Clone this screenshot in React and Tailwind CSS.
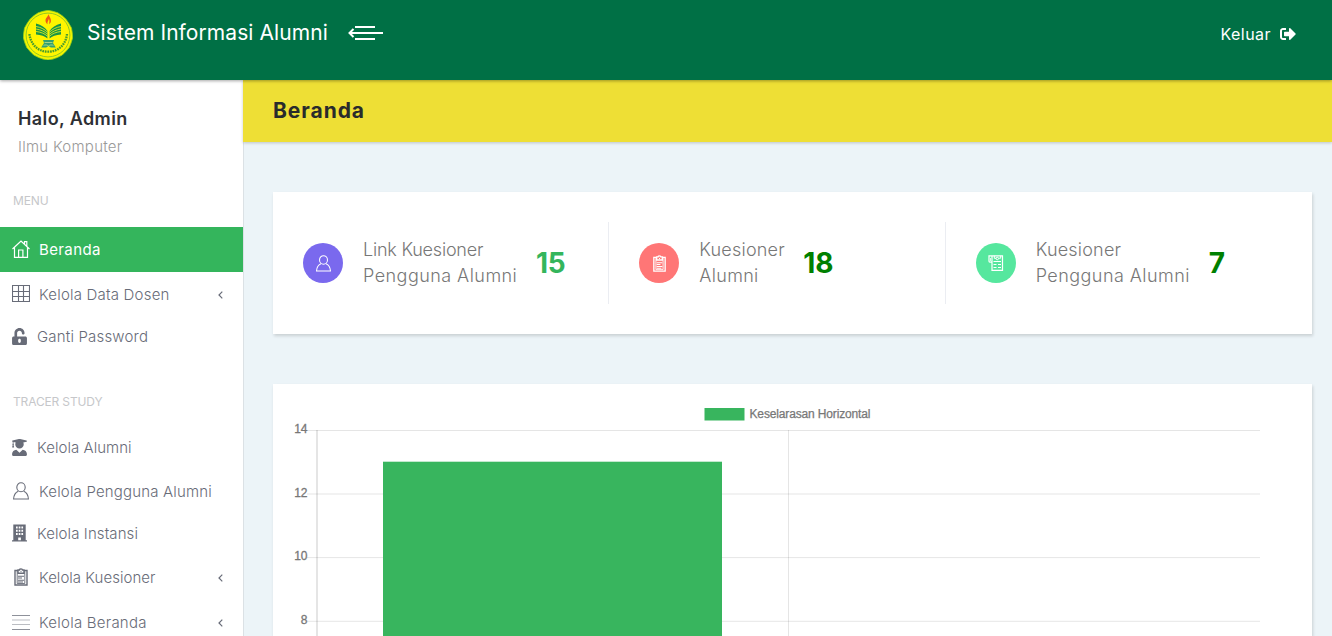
import { FaSignOutAlt, FaUnlockAlt, FaUserGraduate } from 'react-icons/fa';

function Logo() {
  return (
    <svg width="50" height="50" viewBox="0 0 50 50" fill="none">
      <path d="M25 .3l5 1 4.800 1.500 4.400 2.900 3.800 3.500 2.900 4.200 2.600 4.500.8 5 .4 4.800-1.500 5-1.900 4.700-3.300 3.900-3.700 3.700-4.500 2.300-4.800 1.800-5 .8-5-.8-4.800-1.800-4.500-2.300-3.700-3.700-3.300-3.900-1.900-4.700L.3 27.700l.4-4.800.8-5 2.600-4.500L7 9.200l3.800-3.500 4.400-2.900L20 1.300z" fill="#f5f500" stroke="#92cb1b" strokeWidth=".8" />
      <circle cx="25" cy="25" r="21.9" fill="#fff500" stroke="#88c326" strokeWidth=".9" />
      <path d="M25.300 4c.4 2.200-2.800 3.700-2.800 6.200 0 1.800.7 3 2 4-.6-2.400 1.200-3.600 1.400-5.500.9 1.900.4 3.600.2 5.500 1.400-1 2.100-2.400 1.800-4.200C27.500 7.600 26.200 6.300 25.300 4z" fill="#ee5a16" />
      <path d="M24.500 28.500V21c-2.500-3.800-6-5.900-11.500-7.500v11c5 .2 9 1.700 11.500 4z" fill="#199447" />
      <path d="M26.500 28.500V21c2.500-3.800 6-5.900 11.500-7.500v11c-5 .2-9 1.700-11.500 4z" fill="#199447" />
      <path d="M13 16.500c5 .8 8.500 2.700 11.500 5.700M13 19c5 .8 8.500 2.500 11.500 5.200M13 21.500c5 .6 8.500 2 11.500 4.700M38 16.500c-5 .8-8.500 2.700-11.500 5.700M38 19c-5 .8-8.500 2.500-11.500 5.200M38 21.500c-5 .6-8.500 2-11.500 4.700" stroke="#f5f51c" strokeWidth=".8" />
      <path d="M25.500 21v9" stroke="#fff500" strokeWidth="1.500" />
      <path d="M20 30h11l-1 3 2.800 4.500h-5l-2.300-1.500-2.300 1.500h-5L21 33z" fill="#33a071" />
      <path d="M21.500 32.500h8M20.500 35.300c2-.6 3.500-.4 5 .7 1.500-1.100 3-1.300 5-.7" stroke="#d4e88e" strokeWidth=".7" />
      <path d="M6.500 24c.7 9 7.500 17.700 18.500 17.700S43 34 44 24" stroke="#4a9c2c" strokeWidth="2.300" strokeDasharray="1.700 .8" />
    </svg>
  );
}

function BackLines() {
  return (
    <svg width="36" height="16" viewBox="0 0 36 16" fill="none" stroke="#fff" strokeWidth="2">
      <path d="M7 2h20M2 8h33M7 14h20M5.500 4L1.500 8l4 4" />
    </svg>
  );
}

function Home() {
  return (
    <svg width="18" height="18" viewBox="0 0 18 18" fill="none" stroke="currentColor" strokeWidth="1.200">
      <path d="M.5 9L9 1l8.500 8M2.500 7.500v9.900h13V7.500M6.600 17.400V10h4.300v7.400M12.500 3.800V1.600h2.300v4.500" />
    </svg>
  );
}

function Table() {
  return (
    <svg width="18" height="18" viewBox="0 0 18 18" fill="none" stroke="currentColor" strokeWidth="1.100">
      <path d="M.5.5h17v16H.5zM6.500.5v16M11.500.5v16M.5 6.500h17M.5 11.500h17" />
    </svg>
  );
}

function Person({ size = 18 }) {
  return (
    <svg width={size} height={size} viewBox="0 0 18 18" fill="none" stroke="currentColor" strokeWidth="1.100">
      <ellipse cx="9" cy="5.200" rx="4.200" ry="4.500" />
      <path d="M6.300 9.200c-2.800 1.200-4.500 3.800-4.700 7.800h14.800c-.2-4-1.900-6.600-4.700-7.800" />
    </svg>
  );
}

function Building() {
  return (
    <svg width="15" height="18" viewBox="0 0 15 18" fill="currentColor">
      <path fillRule="evenodd" d="M1.300.5h12.400v15.800h1.300v1.200H0v-1.200h1.300zM4 2.500v2h1.700v-2zm2.700 0v2h1.700v-2zm2.700 0v2h1.700v-2zM4 5.700v2h1.700v-2zm2.700 0v2h1.700v-2zm2.700 0v2h1.700v-2zM4 8.900v2h1.700v-2zm2.700 0v2h1.700v-2zm2.700 0v2h1.700v-2zM6.200 13.500v2.800h2.700v-2.800z" />
    </svg>
  );
}

function Clipboard({ size = 18 }) {
  return (
    <svg width={size} height={size} viewBox="0 0 18 18" fill="none" stroke="currentColor" strokeWidth="1.400">
      <path d="M6 2.500H3v14.500h12V2.500h-3M6 2h1.500C7.500.5 10.500.5 10.500 2H12v3.300H6z" />
      <path d="M5.200 2v13.500h7.600V2" strokeWidth=".9" />
      <path d="M6 8.200h6M6 10h4M6 12.200h6M6 14h5" strokeWidth="1.100" />
      <circle cx="9" cy="3.600" r=".6" fill="currentColor" stroke="none" />
    </svg>
  );
}

function Lines() {
  return (
    <svg width="18" height="18" viewBox="0 0 18 18" fill="none" stroke="currentColor">
      <path d="M0 2.500h18M0 16.500h18" strokeWidth="1" strokeOpacity=".75" />
      <path d="M0 7h18M0 11.500h18" strokeWidth="1" strokeOpacity=".45" />
    </svg>
  );
}

function News() {
  return (
    <svg width="16" height="16" viewBox="0 0 16 16" fill="none" stroke="currentColor" strokeWidth="1.200">
      <path d="M4 .8h10.500v14.500H4V.8zM4 .8H1v5.500c0 1.200 3 1.200 3 0" />
      <path d="M6.300.8v2.500h2M10.700 3.200h2V.8M8 3.500a1.200 1.200 0 1 0 2.500 0 1.200 1.200 0 1 0-2.500 0M5.500 6.500h7.500M5.500 9.500h3M10 9.500h3M5.500 12.500h3M10 12.500h3" strokeWidth="1" />
      <path d="M2.500 3v3" strokeWidth=".8" />
    </svg>
  );
}

function Chevron() {
  return (
    <svg className="mt-px ml-auto mr-5" width="5" height="8" viewBox="0 0 5 8" fill="none" stroke="currentColor" strokeWidth="1.200">
      <path d="M4.300.7L1 4l3.300 3.300" />
    </svg>
  );
}

function Item({ icon, label, spacing, active, small, more }) {
  return (
    <a className={`flex items-center pl-3 ${small ? 'h-[41px] gap-[10px]' : 'h-[45px] gap-[9px]'} ${active ? 'bg-[#34b55c] text-white' : 'text-[#686c78]'}`}>
      <span className={small ? 'pb-[3px]' : 'pb-px'}>{icon}</span>
      <span className={`whitespace-nowrap text-[15px] ${small ? '' : 'pt-[2px]'} ${active ? 'font-normal' : 'font-light'} ${spacing}`}>{label}</span>
      {more && <Chevron />}
    </a>
  );
}

function Stat({ color, icon, lines, width, value, valueColor, last }) {
  return (
    <div className={`mr-[30px] flex h-[82px] items-center border-r ${last ? 'border-transparent' : 'border-[#ebedf2]'}`}>
      <div className={`flex size-10 shrink-0 items-center justify-center rounded-full text-white ${color}`}>{icon}</div>
      <div className={`ml-5 shrink-0 whitespace-nowrap text-[18px] leading-[26px] font-light text-[#777] ${width}`}>
        {lines.map(([text, spacing]) => (
          <div key={text} className={spacing}>{text}</div>
        ))}
      </div>
      <div className={`ml-4 text-[28px] leading-[34px] font-bold tracking-[-0.2px] ${valueColor}`}>{value}</div>
    </div>
  );
}

function Chart() {
  const ticks = [[14, 430.5], [12, 494], [10, 557.6], [8, 621.3]];
  return (
    <svg className="block" width="1039" height="252" viewBox="273 384 1039 252" fontFamily="Liberation Sans, Arial, sans-serif" fontSize="12" fill="#777">
      {ticks.map(([n, y]) => (
        <g key={n}>
          <path d={`M307 ${y}H1260`} stroke="#000" strokeOpacity=".1" />
          <text x="307.500" y={y + 2.5} textAnchor="end" stroke="#777" strokeWidth=".3">{n}</text>
        </g>
      ))}
      <path d="M317 430v206" stroke="#000" strokeOpacity=".13" strokeWidth="1.600" />
      <path d="M788.500 430v206" stroke="#000" strokeOpacity=".1" />
      <rect x="383" y="461.700" width="339" height="180" fill="#38b55e" />
      <rect x="704.500" y="408" width="40" height="12.500" fill="#38b55e" />
      <text x="749.500" y="417.500" textLength="121" stroke="#777" strokeWidth=".25">Keselarasan Horizontal</text>
    </svg>
  );
}

export default function App() {
  return (
    <div className="flex h-[636px] w-[1332px] flex-col overflow-hidden bg-[#ecf4f8] font-['Inter',sans-serif]">
      <header className="z-20 flex h-20 shrink-0 items-start bg-[#007045] pl-[23px] text-white shadow-[0_1px_3px_rgba(0,0,0,0.35)]">
        <div className="mt-[10px]"><Logo /></div>
        <h1 className="ml-[14px] mt-[17px] w-[260px] whitespace-nowrap text-[21px] leading-8 font-normal tracking-[0.08px]">Sistem Informasi Alumni</h1>
        <div className="mt-[25px] ml-px"><BackLines /></div>
        <a className="ml-auto mr-[36px] mt-[22px] flex items-center gap-[9px] text-[16px] leading-6 tracking-[0.45px]">
          Keluar <FaSignOutAlt size={16} />
        </a>
      </header>
      <div className="flex min-h-0 flex-1">
        <aside className="w-[244px] shrink-0 border-r border-[#dbe1e5] bg-white">
          <div className="h-[95px] pl-[18px] pt-[26px]">
            <div className="text-[18px] leading-[26px] font-semibold tracking-[0.4px] text-[#2e3035]">Halo, Admin</div>
            <div className="mt-[2px] text-[15px] leading-[26px] font-light tracking-[0.27px] text-[#999]">Ilmu Komputer</div>
          </div>
          <div className="flex h-[52px] items-center pl-[13px] text-[12px] tracking-[-0.1px] text-[#c6c7ca]">MENU</div>
          <nav>
            <Item icon={<Home />} label="Beranda" spacing="tracking-[0.38px]" active />
            <Item icon={<Table />} label="Kelola Data Dosen" spacing="tracking-[0.2px]" more />
            <Item icon={<FaUnlockAlt className="h-[17px] w-[15px]" />} label="Ganti Password" spacing="tracking-[0.18px]" small />
          </nav>
          <div className="mt-[18px] flex h-[52px] items-center pl-[13px] text-[12px] tracking-[-0.15px] text-[#c6c7ca]">TRACER STUDY</div>
          <nav>
            <Item icon={<FaUserGraduate className="h-[17px] w-[15px]" />} label="Kelola Alumni" spacing="tracking-[0.05px]" small />
            <Item icon={<Person />} label="Kelola Pengguna Alumni" spacing="tracking-[0.18px]" />
            <Item icon={<Building />} label="Kelola Instansi" spacing="tracking-[0.1px]" small />
            <Item icon={<Clipboard />} label="Kelola Kuesioner" spacing="tracking-[0.03px]" more />
            <Item icon={<Lines />} label="Kelola Beranda" spacing="tracking-[0.24px]" more />
          </nav>
        </aside>
        <main className="flex min-w-0 flex-1 flex-col">
          <div className="-ml-px flex h-[62px] shrink-0 items-center bg-[#eedf35] pl-[30px] shadow-[0_1px_3px_rgba(0,0,0,0.2)]">
            <h2 className="text-[21px] font-bold tracking-[0.95px] text-[#292b2c]">Beranda</h2>
          </div>
          <section className="ml-[29px] mr-5 mt-[50px] grid h-[142px] shrink-0 grid-cols-3 items-center bg-white pl-[30px] shadow-[1px_2px_3px_rgba(0,0,0,0.15)]">
            <Stat color="bg-[#7a69ee]" icon={<Person size={17} />} lines={[['Link Kuesioner', 'tracking-[-0.22px]'], ['Pengguna Alumni', 'tracking-[0.45px]']]} width="w-[157px]" value="15" valueColor="text-[#34b55c]" />
            <Stat color="bg-[#ff7676]" icon={<Clipboard size={17} />} lines={[['Kuesioner', 'tracking-[0.2px]'], ['Alumni', 'tracking-[0.3px]']]} width="w-[88px]" value="18" valueColor="text-[#008000]" />
            <Stat color="bg-[#56e79e]" icon={<News />} lines={[['Kuesioner', 'tracking-[0.2px]'], ['Pengguna Alumni', 'tracking-[0.45px]']]} width="w-[157px]" value="7" valueColor="text-[#008000]" last />
          </section>
          <section className="ml-[29px] mr-5 mt-[50px] bg-white shadow-[1px_2px_3px_rgba(0,0,0,0.15)]">
            <Chart />
          </section>
        </main>
      </div>
    </div>
  );
}
